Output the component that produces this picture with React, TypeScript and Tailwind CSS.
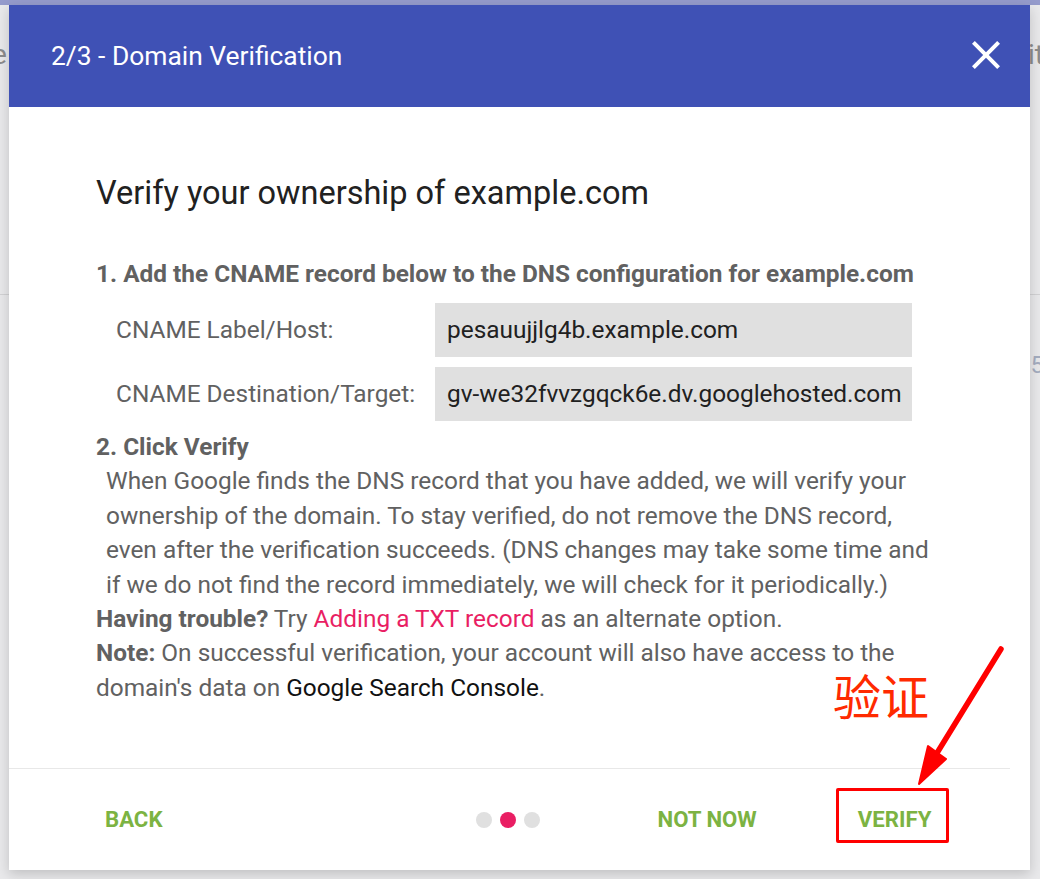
const rows = [
  { label: 'CNAME Label/Host:', value: 'pesauujjlg4b.example.com' },
  { label: 'CNAME Destination/Target:', value: 'gv-we32fvvzgqck6e.dv.googlehosted.com' },
]

function CloseIcon(){
  return (
    <svg width="48" height="48" viewBox="0 0 24 24" fill="#fff">
      <path d="M19 6.41 17.59 5 12 10.59 6.41 5 5 6.41 10.59 12 5 17.59 6.41 19 12 13.41 17.59 19 19 17.59 13.41 12z" />
    </svg>
  )
}

export default function App(){
  return (
    <div className="relative w-[1040px] h-[879px] overflow-hidden bg-[#e9e9eb] font-[Roboto,'Noto_Sans_CJK_SC',sans-serif]">
      {/* page behind the overlay */}
      <div className="h-[5px] bg-[#959bcc]" />
      <div className="flex justify-between h-[100px] items-center text-[28px] text-[#8c8c8c] leading-none">
        <span className="-ml-[8px]">e</span>
        <span className="-mr-[4px]">it</span>
      </div>
      <div className="mt-[189px] h-px bg-[#d2d2d4]" />
      <div className="flex justify-end mt-[58px] text-[24px] text-[#a5adc0] leading-none">
        <span className="-mr-[4px]">5</span>
      </div>

      {/* dialog */}
      <div className="absolute left-[9px] top-[5px] w-[1021px] h-[865px] bg-white shadow-[0_4px_12px_rgba(0,0,0,0.18)] flex flex-col">
        <div className="h-[102px] bg-[#3f51b5] flex items-center justify-between pl-[42px] pr-[20px]">
          <h1 className="text-white text-[26.4px] leading-none">2/3 - Domain Verification</h1>
          <button aria-label="Close" className="-mt-[2px]"><CloseIcon /></button>
        </div>

        <div className="flex-1 pl-[87px] pt-[68px]">
          <h2 className="text-[32.5px] leading-[36px] text-[#212121]">Verify your ownership of example.com</h2>
          <div className="mt-[46px] text-[24.4px] leading-[34px] text-[#616161]">
            <div className="font-bold whitespace-nowrap">1. Add the CNAME record below to the DNS configuration for example.com</div>
            <div className="mt-[12px] flex flex-col gap-[10px] pl-[20px]">
              {rows.map(r => (
                <div key={r.label} className="flex items-center">
                  <div className="w-[319px]">{r.label}</div>
                  <div className="w-[477px] h-[54px] bg-[#e0e0e0] flex items-center pl-[12px] text-[#212121] whitespace-nowrap">{r.value}</div>
                </div>
              ))}
            </div>
            <div className="mt-[9px] leading-[34.4px] whitespace-nowrap">
              <div className="font-bold">2. Click Verify</div>
              <p className="pl-[10px]">
                When Google finds the DNS record that you have added, we will verify your<br />
                ownership of the domain. To stay verified, do not remove the DNS record,<br />
                even after the verification succeeds. (DNS changes may take some time and<br />
                if we do not find the record immediately, we will check for it periodically.)
              </p>
              <p><b>Having trouble?</b> Try <a className="text-[#e91e63]">Adding a TXT record</a> as an alternate option.</p>
              <p><b>Note:</b> On successful verification, your account will also have access to the<br />domain's data on <span className="text-[#111]">Google Search Console</span>.</p>
            </div>
          </div>
        </div>

        <div className="h-px bg-[#e8e8e8] mr-[20px]" />
        <div className="h-[101px] flex items-center pl-[96px] text-[22.2px] font-bold text-[#7cb342]">
          <button>BACK</button>
          <div className="ml-[313px] flex gap-[8px]">
            <span className="w-[16px] h-[16px] rounded-full bg-[#e0e0e0]" />
            <span className="w-[16px] h-[16px] rounded-full bg-[#e91e63]" />
            <span className="w-[16px] h-[16px] rounded-full bg-[#e0e0e0]" />
          </div>
          <button className="ml-[118px]">NOT NOW</button>
          <button className="ml-[101px]">VERIFY</button>
        </div>
      </div>

      {/* annotation */}
      <div className="absolute left-[833px] top-[670px] text-[48px] leading-[48px] text-[#ff2a00] font-['Noto_Sans_CJK_SC',sans-serif] font-normal">验证</div>
      <div className="absolute left-[836px] top-[788px] w-[113px] h-[55px] border-[3px] border-[#ff0000] rounded-[2px]" />
      <svg className="absolute inset-0 pointer-events-none" width="1040" height="879">
        <line x1="1001" y1="649" x2="937" y2="753" stroke="#ff0000" strokeWidth="5.5" strokeLinecap="round" />
        <polygon points="919,784 946,759 928,746" fill="#ff0000" stroke="#ff0000" strokeWidth="2" strokeLinejoin="round" />
      </svg>
    </div>
  )
}
